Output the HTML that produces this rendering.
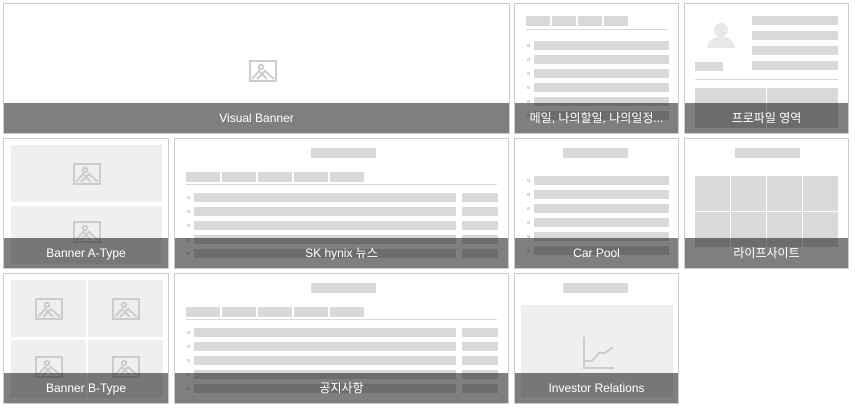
<!DOCTYPE html>
<html><head><meta charset="utf-8"><style>
*{margin:0;padding:0;box-sizing:border-box}
body{width:855px;height:408px;background:#fff;position:relative;overflow:hidden;font-family:"Liberation Sans","Noto Sans CJK KR",sans-serif}
.t{position:absolute;border:1px solid #ccc;background:#fff;overflow:hidden}
.b{position:absolute;background:#d9d9d9}
.g{position:absolute;background:#efefef}
.d{position:absolute;width:3px;height:3px;background:#d9d9d9}
.ln{position:absolute;height:1px;background:#d9d9d9}
.ov{position:absolute;left:0;right:0;bottom:0;height:30px;background:rgba(0,0,0,0.5);color:#fff;font-size:12px;text-align:center;line-height:30px;white-space:nowrap}
svg.i{position:absolute;width:28px;height:22px}
</style></head><body>
<svg width="0" height="0" style="position:absolute"><defs><g id="im" fill="none" stroke="#ccc" stroke-width="2"><rect x="1" y="1" width="26" height="20"/><circle cx="12" cy="7" r="2.2"/><path d="M3 19 L10 11 L18 19 M8 19 L16 11 L25 19"/></g></defs></svg>

<!-- Row1 -->
<div class="t" style="left:3px;top:3px;width:507px;height:131px">
<svg class="i" style="left:245px;top:56px"><use href="#im"/></svg>
<div class="ov">Visual Banner</div></div>

<div class="t" style="left:514px;top:3px;width:165px;height:131px">
<div class="b" style="left:11px;top:12px;width:24px;height:10px"></div>
<div class="b" style="left:37px;top:12px;width:24px;height:10px"></div>
<div class="b" style="left:63px;top:12px;width:24px;height:10px"></div>
<div class="b" style="left:89px;top:12px;width:24px;height:10px"></div>
<div class="ln" style="left:11px;top:25px;width:142px"></div>
<div class="d" style="left:12px;top:40px"></div><div class="b" style="left:19px;top:37px;width:135px;height:9px"></div>
<div class="d" style="left:12px;top:54px"></div><div class="b" style="left:19px;top:51px;width:135px;height:9px"></div>
<div class="d" style="left:12px;top:68px"></div><div class="b" style="left:19px;top:65px;width:135px;height:9px"></div>
<div class="d" style="left:12px;top:82px"></div><div class="b" style="left:19px;top:79px;width:135px;height:9px"></div>
<div class="d" style="left:12px;top:96px"></div><div class="b" style="left:19px;top:93px;width:135px;height:9px"></div>
<div class="d" style="left:12px;top:110px"></div><div class="b" style="left:19px;top:107px;width:135px;height:9px"></div>
<div class="ov">메일, 나의할일, 나의일정...</div></div>

<div class="t" style="left:684px;top:3px;width:165px;height:131px">
<svg style="position:absolute;left:20px;top:18px" width="32" height="26"><circle cx="16" cy="8" r="7" fill="#e8e8e8"/><path d="M2 26 Q3 17 12 15 L20 15 Q29 17 30 26Z" fill="#e8e8e8"/></svg>
<div class="b" style="left:10px;top:58px;width:28px;height:9px"></div>
<div class="b" style="left:67px;top:12px;width:86px;height:9px"></div>
<div class="b" style="left:67px;top:27px;width:86px;height:9px"></div>
<div class="b" style="left:67px;top:42px;width:86px;height:9px"></div>
<div class="b" style="left:67px;top:57px;width:86px;height:9px"></div>
<div class="ln" style="left:10px;top:75px;width:143px"></div>
<div class="b" style="left:10px;top:84px;width:71px;height:40px"></div>
<div class="b" style="left:82px;top:84px;width:71px;height:40px"></div>
<div class="ov">프로파일 영역</div></div>

<!-- Row2 -->
<div class="t" style="left:3px;top:138px;width:166px;height:131px">
<div class="g" style="left:7px;top:6px;width:151px;height:57px"></div>
<div class="g" style="left:7px;top:67px;width:151px;height:58px"></div>
<svg class="i" style="left:69px;top:24px"><use href="#im"/></svg>
<svg class="i" style="left:69px;top:82px"><use href="#im"/></svg>
<div class="ov">Banner A-Type</div></div>

<div class="t" style="left:174px;top:138px;width:335px;height:131px">
<div class="b" style="left:136px;top:9px;width:65px;height:10px"></div>
<div class="b" style="left:11px;top:33px;width:34px;height:10px"></div>
<div class="b" style="left:47px;top:33px;width:34px;height:10px"></div>
<div class="b" style="left:83px;top:33px;width:34px;height:10px"></div>
<div class="b" style="left:119px;top:33px;width:34px;height:10px"></div>
<div class="b" style="left:155px;top:33px;width:34px;height:10px"></div>
<div class="ln" style="left:11px;top:45px;width:311px"></div>
<div class="d" style="left:12px;top:57px"></div><div class="b" style="left:19px;top:54px;width:262px;height:9px"></div><div class="b" style="left:287px;top:54px;width:36px;height:9px"></div>
<div class="d" style="left:12px;top:71px"></div><div class="b" style="left:19px;top:68px;width:262px;height:9px"></div><div class="b" style="left:287px;top:68px;width:36px;height:9px"></div>
<div class="d" style="left:12px;top:85px"></div><div class="b" style="left:19px;top:82px;width:262px;height:9px"></div><div class="b" style="left:287px;top:82px;width:36px;height:9px"></div>
<div class="d" style="left:12px;top:99px"></div><div class="b" style="left:19px;top:96px;width:262px;height:9px"></div><div class="b" style="left:287px;top:96px;width:36px;height:9px"></div>
<div class="d" style="left:12px;top:113px"></div><div class="b" style="left:19px;top:110px;width:262px;height:9px"></div><div class="b" style="left:287px;top:110px;width:36px;height:9px"></div>
<div class="ov">SK hynix 뉴스</div></div>

<div class="t" style="left:514px;top:138px;width:165px;height:131px">
<div class="b" style="left:48px;top:9px;width:65px;height:10px"></div>
<div class="d" style="left:12px;top:40px"></div><div class="b" style="left:19px;top:37px;width:135px;height:9px"></div>
<div class="d" style="left:12px;top:54px"></div><div class="b" style="left:19px;top:51px;width:135px;height:9px"></div>
<div class="d" style="left:12px;top:68px"></div><div class="b" style="left:19px;top:65px;width:135px;height:9px"></div>
<div class="d" style="left:12px;top:82px"></div><div class="b" style="left:19px;top:79px;width:135px;height:9px"></div>
<div class="d" style="left:12px;top:96px"></div><div class="b" style="left:19px;top:93px;width:135px;height:9px"></div>
<div class="d" style="left:12px;top:110px"></div><div class="b" style="left:19px;top:107px;width:135px;height:9px"></div>
<div class="ov">Car Pool</div></div>

<div class="t" style="left:684px;top:138px;width:165px;height:131px">
<div class="b" style="left:50px;top:9px;width:65px;height:10px"></div>
<div class="b" style="left:10px;top:37px;width:35px;height:35px"></div>
<div class="b" style="left:46px;top:37px;width:35px;height:35px"></div>
<div class="b" style="left:82px;top:37px;width:35px;height:35px"></div>
<div class="b" style="left:118px;top:37px;width:35px;height:35px"></div>
<div class="b" style="left:10px;top:73px;width:35px;height:35px"></div>
<div class="b" style="left:46px;top:73px;width:35px;height:35px"></div>
<div class="b" style="left:82px;top:73px;width:35px;height:35px"></div>
<div class="b" style="left:118px;top:73px;width:35px;height:35px"></div>
<div class="ov">라이프사이트</div></div>

<!-- Row3 -->
<div class="t" style="left:3px;top:273px;width:166px;height:131px">
<div class="g" style="left:7px;top:6px;width:75px;height:57px"></div>
<div class="g" style="left:84px;top:6px;width:75px;height:57px"></div>
<div class="g" style="left:7px;top:66px;width:75px;height:58px"></div>
<div class="g" style="left:84px;top:66px;width:75px;height:58px"></div>
<svg class="i" style="left:31px;top:24px"><use href="#im"/></svg>
<svg class="i" style="left:108px;top:24px"><use href="#im"/></svg>
<svg class="i" style="left:31px;top:82px"><use href="#im"/></svg>
<svg class="i" style="left:108px;top:82px"><use href="#im"/></svg>
<div class="ov">Banner B-Type</div></div>

<div class="t" style="left:174px;top:273px;width:335px;height:131px">
<div class="b" style="left:136px;top:9px;width:65px;height:10px"></div>
<div class="b" style="left:11px;top:33px;width:34px;height:10px"></div>
<div class="b" style="left:47px;top:33px;width:34px;height:10px"></div>
<div class="b" style="left:83px;top:33px;width:34px;height:10px"></div>
<div class="b" style="left:119px;top:33px;width:34px;height:10px"></div>
<div class="b" style="left:155px;top:33px;width:34px;height:10px"></div>
<div class="ln" style="left:11px;top:45px;width:311px"></div>
<div class="d" style="left:12px;top:57px"></div><div class="b" style="left:19px;top:54px;width:262px;height:9px"></div><div class="b" style="left:287px;top:54px;width:36px;height:9px"></div>
<div class="d" style="left:12px;top:71px"></div><div class="b" style="left:19px;top:68px;width:262px;height:9px"></div><div class="b" style="left:287px;top:68px;width:36px;height:9px"></div>
<div class="d" style="left:12px;top:85px"></div><div class="b" style="left:19px;top:82px;width:262px;height:9px"></div><div class="b" style="left:287px;top:82px;width:36px;height:9px"></div>
<div class="d" style="left:12px;top:99px"></div><div class="b" style="left:19px;top:96px;width:262px;height:9px"></div><div class="b" style="left:287px;top:96px;width:36px;height:9px"></div>
<div class="d" style="left:12px;top:113px"></div><div class="b" style="left:19px;top:110px;width:262px;height:9px"></div><div class="b" style="left:287px;top:110px;width:36px;height:9px"></div>
<div class="ov">공지사항</div></div>

<div class="t" style="left:514px;top:273px;width:165px;height:131px">
<div class="b" style="left:48px;top:9px;width:65px;height:10px"></div>
<div class="g" style="left:6px;top:31px;width:152px;height:92px"></div>
<svg style="position:absolute;left:66px;top:62px" width="36" height="35" fill="none" stroke="#ccc" stroke-width="2"><path d="M3 1 V32 H33"/><path d="M4 25 H11 L18 17 H24 L32 11"/></svg>
<div class="ov">Investor Relations</div></div>
</body></html>
